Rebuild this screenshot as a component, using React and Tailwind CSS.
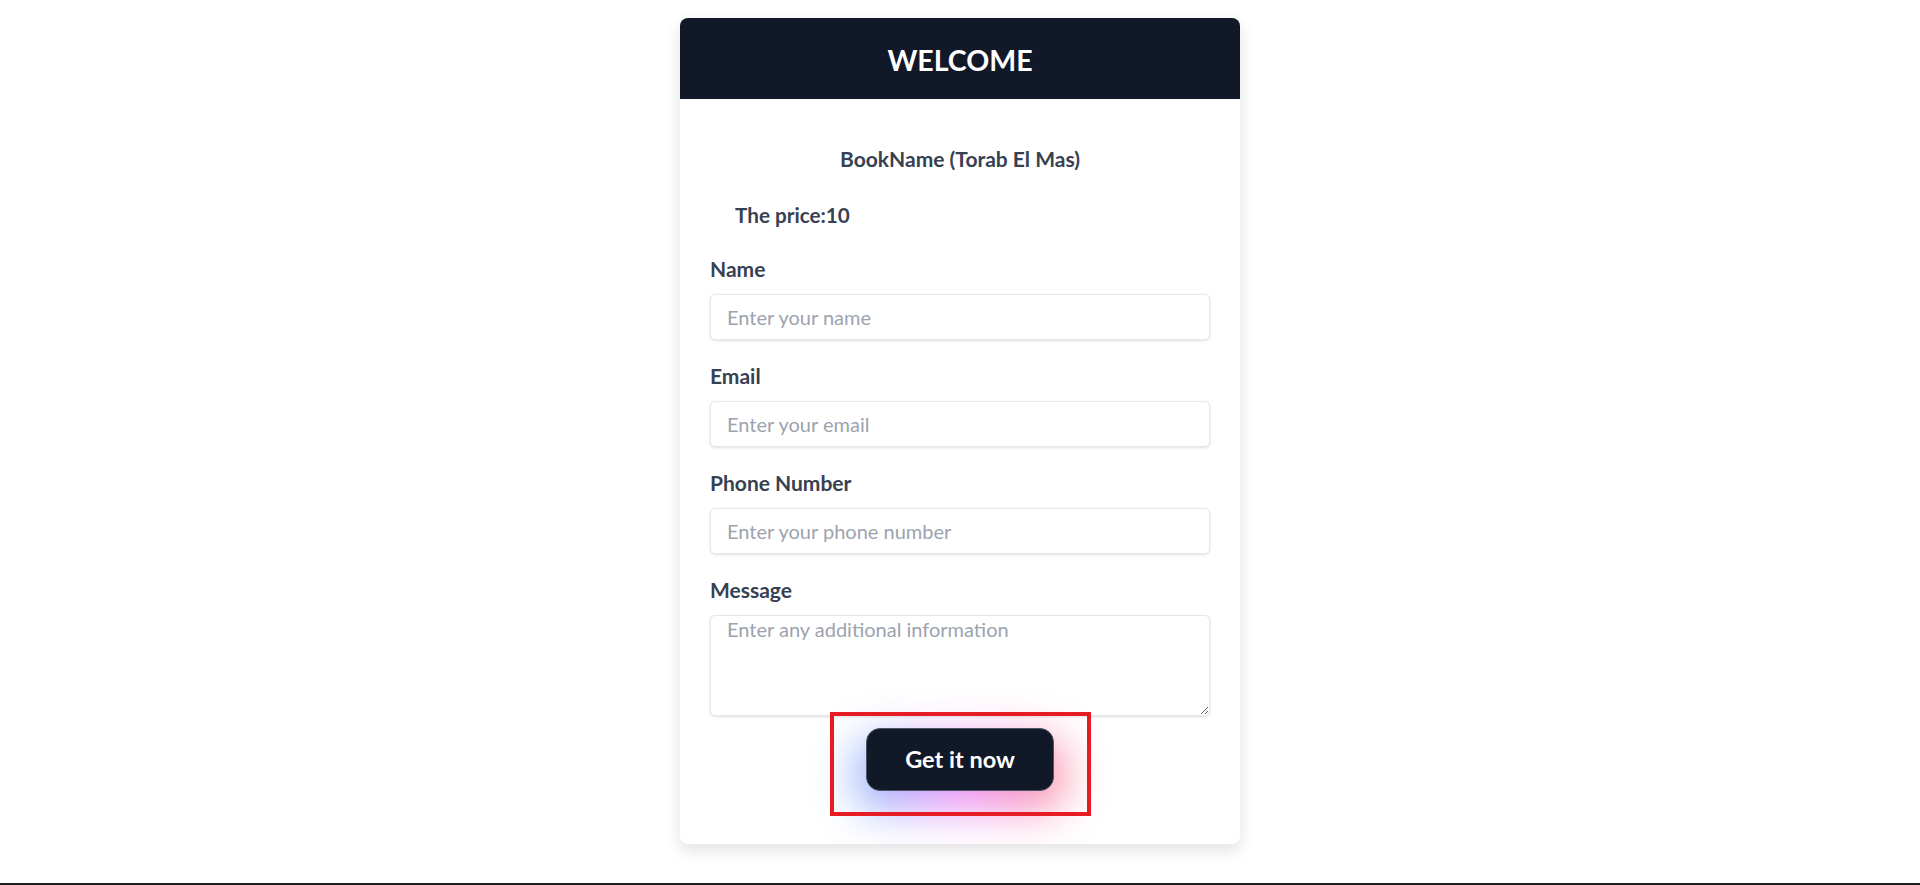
export default function App() {
  const font = { fontFamily: 'Lato, "Open Sans", sans-serif' };
  const Field = ({ label, placeholder }) => (
    <div className="mb-[24px]">
      <label className="block text-[21px] leading-[24px] font-bold text-[#374151] mb-[13px]">{label}</label>
      <input
        placeholder={placeholder}
        className="block w-full h-[46px] px-[16px] rounded-[5px] border border-[#e5e7eb] shadow-[0_1px_3px_rgba(0,0,0,0.12)] text-[20px] text-[#374151] placeholder:text-[#9ca3af] outline-none bg-white"
      />
    </div>
  );
  return (
    <div className="w-full h-[885px] flex flex-col bg-white" style={font}>
      <div className="flex-1 flex justify-center pt-[18px]">
        <div className="w-[560px] h-[826px] rounded-[8px] bg-white shadow-[0_6px_16px_rgba(0,0,0,0.12)] overflow-hidden flex flex-col">
          <div className="h-[81px] bg-[#111827] flex items-center justify-center pt-[4px]">
            <h1 className="text-white text-[28.5px] font-bold">WELCOME</h1>
          </div>
          <div className="px-[30px] pt-[48px]">
            <p className="text-center text-[21px] leading-[24px] font-bold text-[#374151]">BookName (Torab El Mas)</p>
            <p className="mt-[32px] pl-[25px] text-[20.7px] leading-[24px] font-bold text-[#374151]">The price:10</p>
            <div className="mt-[30px]">
              <Field label="Name" placeholder="Enter your name" />
              <Field label="Email" placeholder="Enter your email" />
              <Field label="Phone Number" placeholder="Enter your phone number" />
              <div>
                <label className="block text-[21px] leading-[24px] font-bold text-[#374151] mb-[13px]">Message</label>
                <textarea
                  placeholder="Enter any additional information"
                  className="block w-full h-[101px] px-[16px] pt-[1px] rounded-[5px] border border-[#e5e7eb] shadow-[0_1px_3px_rgba(0,0,0,0.12)] text-[20px] leading-[24px] text-[#374151] placeholder:text-[#9ca3af] outline-none bg-white resize-y"
                />
              </div>
            </div>
            <div className="flex justify-center mt-[12px]">
              <div className="relative">
                <div className="absolute left-[-10px] right-[-10px] top-[10px] bottom-[-20px] rounded-3xl bg-gradient-to-r from-[#60a5fa] via-[#e879f9] to-[#fb7185] blur-[22px] opacity-80"></div>
                <button className="relative w-[188px] h-[63px] rounded-[14px] bg-[#111827] border border-[#4b5563] text-white text-[23.5px] font-bold">
                  Get it now
                </button>
                <div className="absolute left-[-36px] top-[-16px] w-[261px] h-[104px] border-[4px] border-[#e51c23] pointer-events-none"></div>
              </div>
            </div>
          </div>
        </div>
      </div>
      <div className="h-[2px] bg-[#1f1f1f]"></div>
    </div>
  );
}
